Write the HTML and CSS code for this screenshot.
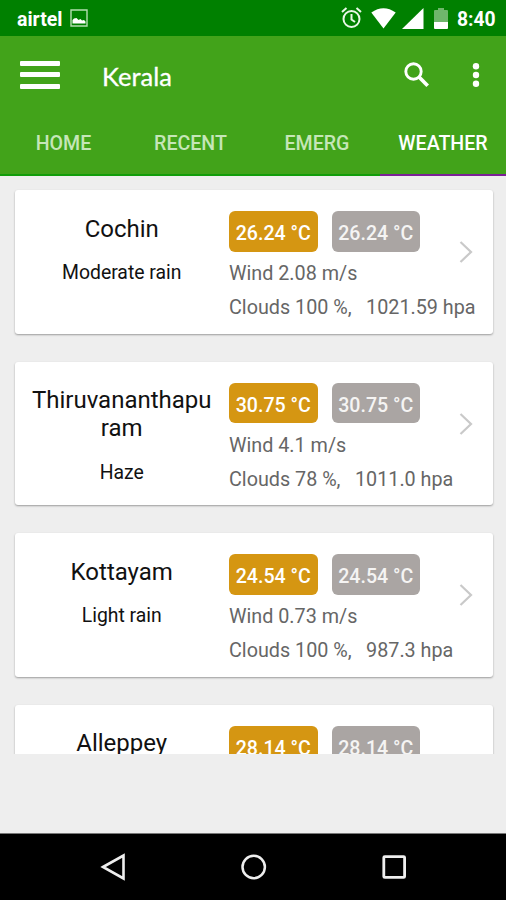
FILE: index.html
```html
<!DOCTYPE html>
<html lang="en">
<head>
<meta charset="utf-8">
<title>Kerala</title>
<link rel="stylesheet" href="styles.css">
</head>
<body>
<div class="status">
  <span class="carrier">airtel</span>
  <svg class="picture" width="18" height="18" viewBox="0 0 18 18"><path d="M1 1h16v16H1z" fill="none" stroke="#b4deb0" stroke-width="1.4"/><path d="M2.500 14.500V11l1.500-1.500 2.500-.5 2 2 2-1 1.500 1.500 2-.5 1.500 1.500v2z" fill="#fff"/></svg>
  <svg class="alarm" width="21" height="22" viewBox="0 0 21 22" fill="none" stroke="#e9f7e7" stroke-width="2"><circle cx="10.500" cy="12" r="8"/><path d="M10.500 7v5.500l3.500 2.500M1 5l4.500-4M20 5l-4.500-4"/></svg>
  <svg class="wifi" width="25" height="21" viewBox="0 0 25 21"><path d="M.3 4.500Q12.500-4 24.700 4.500L12.500 20.500z" fill="#fff"/></svg>
  <svg class="signal" width="22" height="21" viewBox="0 0 22 21"><path d="M0 21L21.500 0v21z" fill="#fff"/></svg>
  <svg class="battery" width="14" height="21" viewBox="0 0 14 21"><path d="M0 14V3q0-1 1-1h3V0h6v2h3q1 0 1 1v11z" fill="#6fb66c"/><path d="M0 14h14v6q0 1-1 1H1q-1 0-1-1z" fill="#fff"/></svg>
  <span class="clock">8:40</span>
</div>
<header class="appbar">
  <div class="toolbar">
    <div class="burger"><i></i><i></i><i></i></div>
    <h1>Kerala</h1>
    <svg class="search" width="26" height="26" viewBox="0 0 26 26" fill="none" stroke="#fff"><circle cx="9.500" cy="9.500" r="7.700" stroke-width="2.900"/><path d="M15 15l8.700 8.700" stroke-width="3.700"/></svg>
    <svg class="more" width="8" height="24" viewBox="0 0 8 24" fill="#fff"><circle cx="4" cy="3.300" r="3.200"/><circle cx="4" cy="12" r="3.200"/><circle cx="4" cy="20.700" r="3.200"/></svg>
  </div>
  <nav class="tabs"><a>HOME</a><a>RECENT</a><a>EMERG</a><a class="active">WEATHER</a></nav>
</header>
<main class="list">
  <article class="card">
    <div class="place"><h2>Cochin</h2><p>Moderate rain</p></div>
    <div class="data"><div class="temps"><b class="high">26.24 °C</b><b class="low">26.24 °C</b></div><p class="wind">Wind 2.08 m/s</p><p class="cloud"><span>Clouds 100 %,</span><span>1021.59 hpa</span></p></div>
    <svg class="chevron" width="14" height="24" viewBox="0 0 14 24"><path d="M1.500 2L12 12 1.500 22" fill="none" stroke="#c9c9c9" stroke-width="2.200"/></svg>
  </article>
  <article class="card">
    <div class="place"><h2>Thiruvananthapuram</h2><p>Haze</p></div>
    <div class="data"><div class="temps"><b class="high">30.75 °C</b><b class="low">30.75 °C</b></div><p class="wind">Wind 4.1 m/s</p><p class="cloud"><span>Clouds 78 %,</span><span>1011.0 hpa</span></p></div>
    <svg class="chevron" width="14" height="24" viewBox="0 0 14 24"><path d="M1.500 2L12 12 1.500 22" fill="none" stroke="#c9c9c9" stroke-width="2.200"/></svg>
  </article>
  <article class="card">
    <div class="place"><h2>Kottayam</h2><p>Light rain</p></div>
    <div class="data"><div class="temps"><b class="high">24.54 °C</b><b class="low">24.54 °C</b></div><p class="wind">Wind 0.73 m/s</p><p class="cloud"><span>Clouds 100 %,</span><span>987.3 hpa</span></p></div>
    <svg class="chevron" width="14" height="24" viewBox="0 0 14 24"><path d="M1.500 2L12 12 1.500 22" fill="none" stroke="#c9c9c9" stroke-width="2.200"/></svg>
  </article>
  <article class="card">
    <div class="place"><h2>Alleppey</h2></div>
    <div class="data"><div class="temps"><b class="high">28.14 °C</b><b class="low">28.14 °C</b></div></div>
  </article>
</main>
<footer class="navbar">
  <svg width="28" height="30" viewBox="0 0 28 30"><path d="M4 15L24.500 3.500v23z" fill="none" stroke="#eee" stroke-width="2.600"/></svg>
  <svg width="28" height="30" viewBox="0 0 28 30"><circle cx="13.700" cy="15" r="11.200" fill="none" stroke="#eee" stroke-width="2.500"/></svg>
  <svg width="28" height="30" viewBox="0 0 28 30"><rect x="3.800" y="4.600" width="20.800" height="20.800" rx="1" fill="none" stroke="#eee" stroke-width="2.800"/></svg>
</footer>
</body>
</html>
```
FILE: styles.css
```css
* { box-sizing: border-box; margin: 0; padding: 0; }
body {
  width: 506px; height: 900px; overflow: hidden;
  display: flex; flex-direction: column;
  background: #eee; font-family: Roboto, sans-serif; color: #111;
}
svg { display: block; flex: none; }

.status {
  height: 36px; flex: none; display: flex; align-items: center;
  padding: 0 11px 0 17px; background: #008000; color: #fff;
}
.carrier { width: 53px; font-size: 19.5px; font-weight: 700; line-height: 36px; padding-top: 3px; }
.alarm { margin-left: auto; }
.wifi { margin-left: 9px; }
.signal { margin-left: 6px; }
.battery { margin-left: 10px; }
.clock { width: 38px; margin-left: 9px; padding-top: 2px; font-size: 19.3px; font-weight: 700; white-space: nowrap; }

.appbar { flex: none; height: 140px; display: flex; flex-direction: column; background: #42a31a; color: #fff; }
.toolbar { flex: none; height: 77px; display: flex; align-items: center; padding: 0 26px 0 20px; }
.burger { width: 40px; height: 28px; display: flex; flex-direction: column; justify-content: space-between; }
.burger i { height: 5px; background: #fff; border-radius: 1px; }
.toolbar h1 { margin-left: 42px; padding-top: 3px; font: 400 25.5px Lato, sans-serif; -webkit-text-stroke: .3px #fff; }
.search { margin-left: auto; }
.more { margin-left: 42px; }
.tabs { flex: none; height: 63px; display: grid; grid-template-columns: 127px 127px 126px 126px; }
.tabs a { height: 63px; padding-top: 20px; border-bottom: 2px solid #129d0a; font-size: 19.6px; font-weight: 500; line-height: 22px; text-align: center; color: #c5e6b8; }
.tabs .active { color: #fff; border-bottom-color: #7b1f96; }

.list { height: 578px; flex: none; overflow: hidden; padding: 14px 13px 0 14.5px; display: flex; flex-direction: column; gap: 28px; }
.card {
  height: 143.600px; flex: none; display: flex; background: #fff;
  border-radius: 3px; box-shadow: 0 1px 2px rgba(0,0,0,.35);
}
.place { width: 214.500px; flex: none; padding: 24.600px 17px 0; text-align: center; }
.place h2 { font-size: 24px; font-weight: 400; line-height: 28px; overflow-wrap: anywhere; }
.place p { margin-top: 18.5px; font-size: 19.4px; line-height: 24px; }
.data { width: 230px; flex: none; padding-top: 21px; color: #666; font-size: 19.75px; white-space: nowrap; }
.temps { display: flex; gap: 14px; }
.temps b { width: 88.500px; height: 40.500px; border-radius: 6px; font-size: 19.6px; font-weight: 500; line-height: 45px; text-align: center; color: #fff; }
.temps .high { background: #d59612; }
.temps .low { background: #aaa5a3; color: #f5f4f3; }
.wind { margin-top: 10.800px; line-height: 24px; }
.cloud { margin-top: 10px; line-height: 24px; display: flex; gap: 14.5px; }
.chevron { margin-top: 50px; }

.navbar {
  flex: none; height: 67px; margin-top: auto; display: flex; align-items: center; justify-content: space-between;
  padding: 0 98px 0 99px; background: #000; border-top: 1px solid #777;
}
```
